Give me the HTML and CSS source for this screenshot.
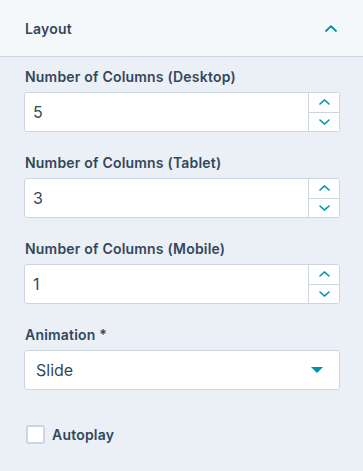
FILE: index.html
```html
<!DOCTYPE html>
<html>
<head>
    <title>Layout settings</title>
    <link rel="stylesheet" href="styles.css">
</head>
<body>
    <!-- Заголовок секции -->
    <div class="panel-header">
        <span class="panel-title">Layout</span>
        <svg class="chevron" width="12" height="7" viewBox="0 0 12 7">
            <path d="M1 6 L6 1.2 L11 6" fill="none" stroke="#0091ae" stroke-width="1.8" stroke-linecap="round" stroke-linejoin="round"/>
        </svg>
    </div>

    <div class="panel-body">
        <div class="form-group">
            <label>Number of Columns (Desktop)</label>
            <div class="number-input">
                <input type="text" value="5">
                <div class="spinner">
                    <button class="spin-btn"><svg width="11" height="6" viewBox="0 0 11 6"><path d="M1 5 L5.5 1 L10 5" fill="none" stroke="#0091ae" stroke-width="1.6" stroke-linecap="round"/></svg></button>
                    <button class="spin-btn"><svg width="11" height="6" viewBox="0 0 11 6"><path d="M1 1 L5.5 5 L10 1" fill="none" stroke="#0091ae" stroke-width="1.6" stroke-linecap="round"/></svg></button>
                </div>
            </div>
        </div>
        <div class="form-group">
            <label>Number of Columns (Tablet)</label>
            <div class="number-input">
                <input type="text" value="3">
                <div class="spinner">
                    <button class="spin-btn"><svg width="11" height="6" viewBox="0 0 11 6"><path d="M1 5 L5.5 1 L10 5" fill="none" stroke="#0091ae" stroke-width="1.6" stroke-linecap="round"/></svg></button>
                    <button class="spin-btn"><svg width="11" height="6" viewBox="0 0 11 6"><path d="M1 1 L5.5 5 L10 1" fill="none" stroke="#0091ae" stroke-width="1.6" stroke-linecap="round"/></svg></button>
                </div>
            </div>
        </div>
        <div class="form-group">
            <label>Number of Columns (Mobile)</label>
            <div class="number-input">
                <input type="text" value="1">
                <div class="spinner">
                    <button class="spin-btn"><svg width="11" height="6" viewBox="0 0 11 6"><path d="M1 5 L5.5 1 L10 5" fill="none" stroke="#0091ae" stroke-width="1.6" stroke-linecap="round"/></svg></button>
                    <button class="spin-btn"><svg width="11" height="6" viewBox="0 0 11 6"><path d="M1 1 L5.5 5 L10 1" fill="none" stroke="#0091ae" stroke-width="1.6" stroke-linecap="round"/></svg></button>
                </div>
            </div>
        </div>
        <div class="form-group form-group-select">
            <label>Animation *</label>
            <div class="select">
                <span>Slide</span>
                <svg width="12" height="6" viewBox="0 0 12 6"><path d="M0 0 H12 L6 6 Z" fill="#0091ae"/></svg>
            </div>
        </div>
        <label class="checkbox-row">
            <span class="checkbox"></span>
            <span class="checkbox-label">Autoplay</span>
        </label>
    </div>
</body>
</html>
```

FILE: styles.css
```css
body { margin: 0; background: #eaf0f6; font-family: "Inter", "Lato", sans-serif; color: #33475b; }
.panel-header { height: 56px; border-bottom: 1px solid #cbd6e2; background: #f5f8fa;
    display: flex; align-items: center; justify-content: space-between; padding: 0 25px 0 25px; }
.panel-title { font-size: 14px; font-weight: 600; letter-spacing: 0.2px; }
.chevron { display: block; margin-right: 1px; }
.panel-body { padding: 11px 23px 0 24px; }
.form-group { margin-bottom: 22px; }
.form-group label { display: block; font-size: 14px; font-weight: 600; line-height: 18px; margin: 0 0 6px 1px; letter-spacing: 0.2px; }
.number-input { display: flex; height: 38px; border: 1px solid #cbd6e2; border-radius: 3px; background: #fff; overflow: hidden; }
.number-input input { flex: 1; border: none; outline: none; padding: 0 8px; font-size: 16px; font-family: inherit; color: #33475b; background: transparent; min-width: 0; }
.spinner { width: 30px; display: flex; flex-direction: column; border-left: 1px solid #cbd6e2; background: #fff; }
.spin-btn { flex: 1; border: none; background: none; padding: 0; display: flex; align-items: center; justify-content: center; cursor: pointer; }
.spin-btn + .spin-btn { border-top: 1px solid #cbd6e2; }
.select { height: 38px; border: 1px solid #cbd6e2; border-radius: 3px; background: #fff; display: flex; align-items: center; justify-content: space-between; padding: 0 16px 0 11px; font-size: 16px; }
.form-group-select { margin-bottom: 34px; }
.checkbox-row { display: flex; align-items: center; height: 20px; padding-left: 2px; }
.checkbox { width: 15px; height: 15px; border: 2px solid #cbd6e2; border-radius: 3px; background: #fff; }
.checkbox-label { font-size: 14px; font-weight: 600; margin-left: 7px; letter-spacing: 0.2px; }
```
